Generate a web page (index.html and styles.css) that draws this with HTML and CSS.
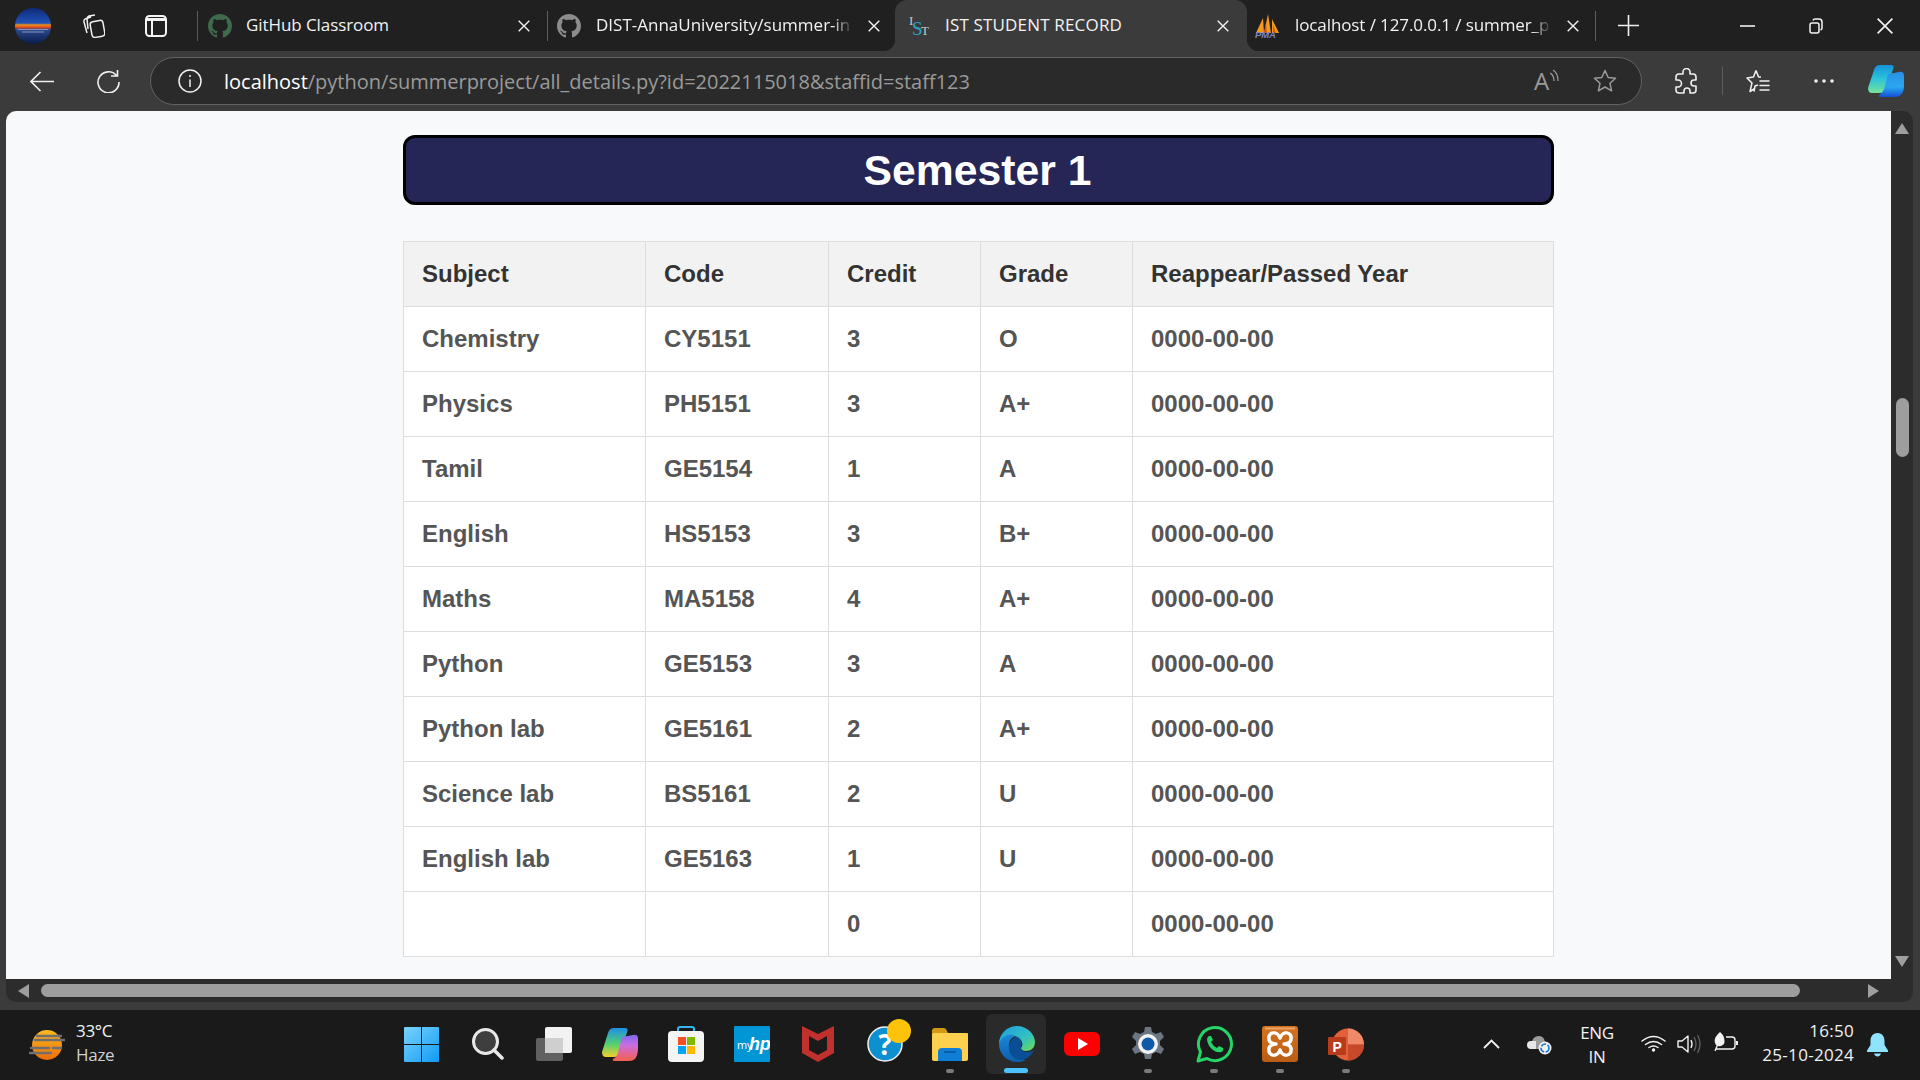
FILE: index.html
```html
<!DOCTYPE html>
<html lang="en">
<head>
    <meta charset="UTF-8">
    <meta name="viewport" content="width=device-width, initial-scale=1.0">
    <title>IST STUDENT RECORD</title>
    <link rel="stylesheet" href="styles.css">
</head>
<body>
    <svg class="defs" width="0" height="0">
        <defs>
            <symbol id="octo" viewBox="0 0 16 16">
                <path d="M8 0C3.58 0 0 3.58 0 8c0 3.54 2.29 6.53 5.47 7.59.4.07.55-.17.55-.38 0-.19-.01-.82-.01-1.49-2.01.37-2.53-.49-2.69-.94-.09-.23-.48-.94-.82-1.13-.28-.15-.68-.52-.01-.53.63-.01 1.08.58 1.23.82.72 1.21 1.87.87 2.33.66.07-.52.28-.87.51-1.07-1.78-.2-3.64-.89-3.64-3.95 0-.87.31-1.59.82-2.15-.08-.2-.36-1.02.08-2.12 0 0 .67-.21 2.2.82.64-.18 1.32-.27 2-.27.68 0 1.36.09 2 .27 1.53-1.04 2.2-.82 2.2-.82.44 1.1.16 1.92.08 2.12.51.56.82 1.27.82 2.15 0 3.07-1.87 3.75-3.65 3.95.29.25.54.73.54 1.48 0 1.07-.01 1.93-.01 2.2 0 .21.15.46.55.38A8.013 8.013 0 0016 8c0-4.42-3.58-8-8-8z"/>
            </symbol>
            <symbol id="close" viewBox="0 0 12 12">
                <path d="M.7.7l10.6 10.6M11.3.7L.7 11.3" fill="none" stroke="#f2f2f2" stroke-width="1.4"/>
            </symbol>
            <linearGradient id="sunset" x1="0" y1="0" x2="0" y2="1">
                <stop offset="0" stop-color="#0e2a78"/>
                <stop offset=".42" stop-color="#1f52b8"/>
                <stop offset=".47" stop-color="#e8921a"/>
                <stop offset=".53" stop-color="#f04a14"/>
                <stop offset=".6" stop-color="#2a4a90"/>
                <stop offset="1" stop-color="#0a1a48"/>
            </linearGradient>
            <linearGradient id="cop-a" x1="0" y1="0" x2="0" y2="1">
                <stop offset="0" stop-color="#1592dc"/>
                <stop offset=".5" stop-color="#2cc4d8"/>
                <stop offset="1" stop-color="#78e29a"/>
            </linearGradient>
            <linearGradient id="cop-b" x1="0" y1="0" x2="0" y2="1">
                <stop offset="0" stop-color="#2a8fe4"/>
                <stop offset=".6" stop-color="#2aa8f0"/>
                <stop offset="1" stop-color="#1450d8"/>
            </linearGradient>
            <linearGradient id="cop-c" x1="0" y1="0" x2="0" y2="1">
                <stop offset="0" stop-color="#1f8fe8"/>
                <stop offset=".55" stop-color="#50d070"/>
                <stop offset="1" stop-color="#f6cf2c"/>
            </linearGradient>
            <linearGradient id="cop-d" x1="0" y1="0" x2="0" y2="1">
                <stop offset="0" stop-color="#7a6cf0"/>
                <stop offset=".4" stop-color="#cc6ce0"/>
                <stop offset="1" stop-color="#f4604c"/>
            </linearGradient>
            <linearGradient id="sun" x1="0" y1="0" x2="0" y2="1">
                <stop offset="0" stop-color="#fdbb1e"/>
                <stop offset="1" stop-color="#ec6c0a"/>
            </linearGradient>
            <linearGradient id="win" x1="0" y1="0" x2="1" y2="1">
                <stop offset="0" stop-color="#7bd3fc"/>
                <stop offset="1" stop-color="#0f9bf5"/>
            </linearGradient>
            <linearGradient id="edge-a" x1="0" y1="0" x2="1" y2="1">
                <stop offset="0" stop-color="#1b9de2"/>
                <stop offset=".6" stop-color="#35c1c0"/>
                <stop offset="1" stop-color="#6fdc50"/>
            </linearGradient>
            <linearGradient id="edge-b" x1="0" y1="0" x2="0" y2="1">
                <stop offset="0" stop-color="#1a8ad8"/>
                <stop offset="1" stop-color="#0c5cae"/>
            </linearGradient>
            <linearGradient id="xampp" x1="0" y1="0" x2="0" y2="1">
                <stop offset="0" stop-color="#d4741f"/>
                <stop offset="1" stop-color="#bb5c16"/>
            </linearGradient>
        </defs>
    </svg>

    <div class="tabbar">
        <svg class="avatar" width="36" height="36" viewBox="0 0 36 36">
            <ellipse cx="18" cy="18" rx="18" ry="18" fill="url(#sunset)"/>
            <path d="M3 21.500h30M7 24h22" stroke="#8c93b8" stroke-width="1"/>
        </svg>
        <svg class="workspaces" width="24" height="24" viewBox="0 0 24 24" fill="none" stroke="#f0f0f0" stroke-width="1.5">
            <rect x="10" y="7" width="13" height="16" rx="3" transform="rotate(-10 16 15)"/>
            <path d="M10 3L4 5Q2.500 6 3 8l3 11M14 1L8 2Q6 3 6 5l1 10"/>
        </svg>
        <svg class="vtabs" width="22" height="22" viewBox="0 0 22 22" fill="none" stroke="#f4f4f4" stroke-width="2">
            <rect x="1" y="1" width="20" height="20" rx="3.500"/>
            <path d="M2 3h18v3H2z" fill="#f4f4f4" stroke="none"/>
            <path d="M7 6v15"/>
        </svg>
        <i class="tab-sep"></i>
        <div class="tab tab-one">
            <svg class="fav-git-green" width="24" height="24"><use href="#octo"/></svg>
            <span class="tab-title">GitHub Classroom</span>
            <svg width="12" height="12"><use href="#close"/></svg>
        </div>
        <i class="tab-sep"></i>
        <div class="tab tab-two">
            <svg class="fav-git-grey" width="24" height="24"><use href="#octo"/></svg>
            <span class="tab-title tab-fade">DIST-AnnaUniversity/summer-in</span>
            <svg width="12" height="12"><use href="#close"/></svg>
        </div>
        <div class="tab tab-active">
            <svg width="21" height="24" viewBox="0 0 21 24">
                <text x="0" y="11" class="fav-i">I</text>
                <text x="3" y="21" class="fav-s">S</text>
                <text x="12" y="21" class="fav-t">T</text>
            </svg>
            <span class="tab-title">IST STUDENT RECORD</span>
            <svg width="12" height="12"><use href="#close"/></svg>
        </div>
        <div class="tab tab-four">
            <svg width="25" height="26" viewBox="0 0 25 26">
                <path d="M1 20L8 5l1 15zM9 20L13 1l3 19zM17 20V6l7 14z" fill="#f29a1f"/>
                <path d="M9 20l2-10 1 10zM18 20V12l3 8z" fill="#d9531e"/>
                <text x="0" y="25" class="fav-pma">PMA</text>
            </svg>
            <span class="tab-title tab-fade">localhost / 127.0.0.1 / summer_p</span>
            <svg width="12" height="12"><use href="#close"/></svg>
        </div>
        <i class="tab-sep"></i>
        <svg class="newtab" width="21" height="21" viewBox="0 0 21 21"><path d="M10.500 0v21M0 10.500h21" stroke="#f2f2f2" stroke-width="1.600"/></svg>
        <svg class="win-min" width="15" height="2" viewBox="0 0 15 2"><path d="M0 1h15" stroke="#f2f2f2" stroke-width="1.600"/></svg>
        <svg class="win-max" width="14" height="16" viewBox="0 0 14 16" fill="none" stroke="#f2f2f2" stroke-width="1.500">
            <rect x="1" y="5" width="9" height="10" rx="2"/>
            <path d="M4 2.500Q4.500 1 6 1h4q3 0 3 3v6q0 1.500-1.500 2"/>
        </svg>
        <svg class="win-close" width="16" height="16" viewBox="0 0 16 16"><path d="M.6.6l14.800 14.800M15.400.6L.6 15.400" stroke="#f5f5f5" stroke-width="1.600"/></svg>
    </div>

    <div class="toolbar">
        <svg class="back" width="24" height="21" viewBox="0 0 24 21" fill="none" stroke="#f0f0f0" stroke-width="1.600"><path d="M24 10.500H1M10.500 1L1 10.500 10.500 20"/></svg>
        <svg class="reload" width="24" height="24" viewBox="0 0 24 24" fill="none" stroke="#f0f0f0" stroke-width="1.600"><path d="M20.500 6.500A10.500 10.500 0 1 0 23 13M21.500 1v6h-6.500"/></svg>
        <div class="address">
            <svg width="24" height="24" viewBox="0 0 24 24" fill="none" stroke="#f0f0f0" stroke-width="1.500">
                <circle cx="12" cy="12" r="11"/>
                <path d="M12 10.500V18"/>
                <circle cx="12" cy="7" r="1" fill="#f0f0f0" stroke="none"/>
            </svg>
            <span class="url"><span class="url-host">localhost</span>/python/summerproject/all_details.py?id=2022115018&amp;staffid=staff123</span>
            <div class="read">
                <span class="read-a">A</span>
                <svg width="9" height="14" viewBox="0 0 9 14" fill="none" stroke="#9a9a9a" stroke-width="1.300"><path d="M0 4q4 2 4 8M3 1q5 3 5 11"/></svg>
            </div>
            <svg class="star" width="24" height="24" viewBox="0 0 24 24" fill="none" stroke="#9a9a9a" stroke-width="1.500"><path d="M12 1.500l3.200 7 7.300.8-5.500 5 1.600 7.500L12 18l-6.600 3.800L7 14.300l-5.500-5 7.300-.8z" stroke-linejoin="round"/></svg>
        </div>
        <svg class="puzzle" width="22" height="26" viewBox="0 0 22 26" fill="none" stroke="#f0f0f0" stroke-width="1.600" stroke-linejoin="round">
            <path d="M8 6V4a3.500 3.500 0 0 1 7 0v2h3q3 0 3 3v3h-2a3 3 0 0 0 0 6h2v4q0 3-3 3h-3v-2a3 3 0 0 0-6 0v2H4q-3 0-3-3v-3h2a3.500 3.500 0 0 0 0-7H1V9q0-3 3-3z"/>
        </svg>
        <i class="tool-sep"></i>
        <svg class="favs" width="24" height="24" viewBox="0 0 24 24" fill="none" stroke="#f0f0f0" stroke-width="1.500" stroke-linejoin="round">
            <path d="M10 1.500l2.600 6.500h2.400M8 22.500l1-5.500 3-1M10 1.500L7.500 8 1 9l5 5-2 8.500 4-2.500"/>
            <path d="M14 12h9M14 16.500h9M14 21h9" stroke-linecap="round"/>
        </svg>
        <svg class="dots" width="20" height="4" viewBox="0 0 20 4" fill="#f0f0f0"><circle cx="2" cy="2" r="1.800"/><circle cx="10" cy="2" r="1.800"/><circle cx="18" cy="2" r="1.800"/></svg>
        <svg class="copilot" width="36" height="32" viewBox="0 0 36 32">
            <path d="M12 0h11q3 0 2.500 3L18 24q-2 4-6 4H4Q0 28 0 23L6 5q1.500-5 6-5z" fill="url(#cop-a)"/>
            <path d="M20 9l11-2q5-1 5 4v9q0 12-9 12H13q-3 0-2-2 3-1 5-6l4-15z" fill="url(#cop-b)"/>
        </svg>
    </div>

    <div class="window">
        <div class="page">
            <div class="content">
                <h1 class="sem-title">Semester 1</h1>
                <table class="marks">
                    <tr><th>Subject</th><th>Code</th><th>Credit</th><th>Grade</th><th>Reappear/Passed Year</th></tr>
                    <tr><td>Chemistry</td><td>CY5151</td><td>3</td><td>O</td><td>0000-00-00</td></tr>
                    <tr><td>Physics</td><td>PH5151</td><td>3</td><td>A+</td><td>0000-00-00</td></tr>
                    <tr><td>Tamil</td><td>GE5154</td><td>1</td><td>A</td><td>0000-00-00</td></tr>
                    <tr><td>English</td><td>HS5153</td><td>3</td><td>B+</td><td>0000-00-00</td></tr>
                    <tr><td>Maths</td><td>MA5158</td><td>4</td><td>A+</td><td>0000-00-00</td></tr>
                    <tr><td>Python</td><td>GE5153</td><td>3</td><td>A</td><td>0000-00-00</td></tr>
                    <tr><td>Python lab</td><td>GE5161</td><td>2</td><td>A+</td><td>0000-00-00</td></tr>
                    <tr><td>Science lab</td><td>BS5161</td><td>2</td><td>U</td><td>0000-00-00</td></tr>
                    <tr><td>English lab</td><td>GE5163</td><td>1</td><td>U</td><td>0000-00-00</td></tr>
                    <tr><td></td><td></td><td>0</td><td></td><td>0000-00-00</td></tr>
                </table>
            </div>
        </div>
        <div class="vbar">
            <i class="arrow arrow-up"></i>
            <i class="vthumb"></i>
            <i class="arrow arrow-down"></i>
        </div>
        <div class="hbar">
            <i class="arrow arrow-left"></i>
            <i class="hthumb"></i>
            <i class="arrow arrow-right"></i>
        </div>
        <div class="corner"></div>
    </div>

    <div class="taskbar">
        <div class="weather">
            <svg width="36" height="30" viewBox="0 0 36 30">
                <circle cx="18" cy="15" r="15" fill="url(#sun)"/>
                <path d="M8 6h24M6 10h30M2 18h18M24 18h8M0 23h22" stroke="#6f6f6f" stroke-width="2.500" stroke-linecap="round"/>
            </svg>
            <div class="weather-text">
                <span class="temp">33°C</span>
                <span class="haze">Haze</span>
            </div>
        </div>
        <div class="apps">
            <div class="app app-win">
                <svg width="35" height="35" viewBox="0 0 35 35" fill="url(#win)">
                    <path d="M1 0h16v17H0V1q0-1 1-1zM18 0h16q1 0 1 1v16H18zM0 18h17v17H1q-1 0-1-1zM18 18h17v16q0 1-1 1H18z"/>
                </svg>
            </div>
            <div class="app">
                <svg width="32" height="32" viewBox="0 0 32 32">
                    <circle cx="13.500" cy="13.500" r="12" fill="#3e3e3e" stroke="#e8e8e8" stroke-width="3"/>
                    <path d="M22 22l8 8" stroke="#e8e8e8" stroke-width="3.500" stroke-linecap="round"/>
                </svg>
            </div>
            <div class="app">
                <svg width="36" height="34" viewBox="0 0 36 34">
                    <rect x="9" y="0" width="27" height="26" rx="2" fill="#f2f2f2"/>
                    <rect x="0" y="11" width="27" height="23" rx="2" fill="#666" fill-opacity=".92"/>
                    <rect x="9" y="11" width="18" height="15" fill="#cfcfcf"/>
                </svg>
            </div>
            <div class="app">
                <svg width="36" height="33" viewBox="0 0 36 33">
                    <path d="M12 0h11q3 0 2.500 3L18 25q-2 4-6 4H4Q0 29 0 24L6 5q1.500-5 6-5z" fill="url(#cop-c)"/>
                    <path d="M20 9l11-2q5-1 5 4v9q0 13-9 13H13q-3 0-2-2 3-1 5-6l4-17z" fill="url(#cop-d)"/>
                </svg>
            </div>
            <div class="app">
                <svg width="36" height="36" viewBox="0 0 36 36">
                    <path d="M10 7V3q0-2 2-2h12q2 0 2 2v4" fill="none" stroke="#35b6f2" stroke-width="2"/>
                    <rect x="0" y="5" width="36" height="31" rx="4" fill="#f4f4f4"/>
                    <rect x="10" y="11" width="8" height="8" fill="#f25022"/>
                    <rect x="19" y="11" width="8" height="8" fill="#7fba00"/>
                    <rect x="10" y="20" width="8" height="8" fill="#00a4ef"/>
                    <rect x="19" y="20" width="8" height="8" fill="#ffb900"/>
                </svg>
            </div>
            <div class="app">
                <svg width="36" height="36" viewBox="0 0 36 36">
                    <rect width="36" height="36" rx="1" fill="#0096d6"/>
                    <text x="3" y="23" class="my">my</text>
                    <text x="15" y="24" class="hp">hp</text>
                </svg>
            </div>
            <div class="app">
                <svg width="32" height="36" viewBox="0 0 32 36">
                    <path d="M0 0l16 8 16-8v27L16 36 0 27z" fill="#c0302c"/>
                    <path d="M7 10l9 5 9-5v14l-9 5-9-5z" fill="#1a1a1a"/>
                </svg>
            </div>
            <div class="app app-help">
                <svg width="44" height="44" viewBox="0 0 44 44">
                    <circle cx="18" cy="25" r="17" fill="#0e8fd0" stroke="#f2f2f2" stroke-width="1.500"/>
                    <text x="18" y="36" class="help-q">?</text>
                    <ellipse cx="32" cy="12" rx="12" ry="12" fill="#fdc30a"/>
                </svg>
            </div>
            <div class="app has-dot">
                <svg width="36" height="33" viewBox="0 0 36 33">
                    <path d="M0 3q0-3 3-3h9q2 0 3 3l1 2h20v6H0z" fill="#d29a12"/>
                    <rect x="0" y="5" width="36" height="28" rx="2" fill="#fdd04e"/>
                    <path d="M6 33V24q0-4 4-4h16q4 0 4 4v9z" fill="#0e7fd4"/>
                    <path d="M12 24h12" stroke="#0b5ea8" stroke-width="2"/>
                </svg>
            </div>
            <div class="app app-edge">
                <svg width="37" height="36" viewBox="0 0 37 36">
                    <path d="M1 18C1 8 9 0 19 0c10 0 18 8 18 16 0 6-4 9-9 9-3 0-5-1-5-3 2-2 2-6-1-9C17 8 7 9 1 18z" fill="url(#edge-a)"/>
                    <path d="M1 18C3 10 12 6 18 10c-5 1-8 6-7 12 1 7 8 13 17 12-3 1.500-6 2-9 2C9 36 1 28 1 18z" fill="url(#edge-b)"/>
                    <path d="M11 22c0-6 3-10 8-11 3 1 5 4 4 9-1 3 2 6 7 6 2 0 5-1 6-2-2 5-6 9-12 10-7 .5-13-5-13-12z" fill="#0a4f96"/>
                </svg>
                <i class="edge-on"></i>
            </div>
            <div class="app">
                <svg width="36" height="24" viewBox="0 0 36 24">
                    <rect width="36" height="24" rx="6" fill="#f00"/>
                    <path d="M14 6l10 6-10 6z" fill="#fff"/>
                </svg>
            </div>
            <div class="app has-dot">
                <svg width="36" height="36" viewBox="0 0 36 36">
                    <path d="M15 1h6l1 5 4 2 5-2 3 5-4 4v4l4 4-3 5-5-2-4 2-1 5h-6l-1-5-4-2-5 2-3-5 4-4v-4L2 11l3-5 5 2 4-2z" fill="#6d7680"/>
                    <circle cx="18" cy="18" r="10" fill="#f2f2f2"/>
                    <circle cx="18" cy="18" r="6.500" fill="#0f5aa8"/>
                </svg>
            </div>
            <div class="app has-dot">
                <svg width="37" height="37" viewBox="0 0 37 37" fill="none">
                    <path d="M2 35l2.500-9A16.500 16.500 0 1 1 11 32.500z" stroke="#25d366" stroke-width="3" stroke-linejoin="round"/>
                    <path d="M13 10q-2 1-2 4 1 6 6 10 4 3 8 2 3-1 2-4l-4-2-2 2q-4-2-6-6l2-2-2-4z" fill="#25d366"/>
                </svg>
            </div>
            <div class="app has-dot">
                <svg width="36" height="36" viewBox="0 0 36 36">
                    <rect width="36" height="36" rx="3" fill="url(#xampp)"/>
                    <path d="M3 2.500h30" stroke="#e8a56a" stroke-width="2"/>
                    <path d="M18 12C16 5 6 5 7 13c0 4 5 5 7 5-2 0-7 1-7 5-1 8 9 8 11 1 2 7 12 7 11-1 0-4-5-5-7-5 2 0 7-1 7-5 1-8-9-8-11-1z" fill="none" stroke="#fff" stroke-width="3.500" stroke-linejoin="round"/>
                </svg>
            </div>
            <div class="app has-dot">
                <svg width="36" height="33" viewBox="0 0 36 33">
                    <circle cx="20" cy="16.500" r="16" fill="#e0613a"/>
                    <path d="M20 .500a16 16 0 0 1 16 16H20z" fill="#ee8a6a"/>
                    <path d="M36 16.500a16 16 0 0 1-16 16v-16z" fill="#c8492a"/>
                    <rect x="0" y="9" width="18" height="18" rx="1" fill="#b83c1c"/>
                    <text x="9" y="23.500" class="ppt-p">P</text>
                </svg>
            </div>
        </div>
        <div class="tray">
            <svg class="chevron" width="17" height="10" viewBox="0 0 17 10" fill="none" stroke="#f2f2f2" stroke-width="1.800"><path d="M1 9l7.500-7.500L16 9"/></svg>
            <svg class="cloud" width="25" height="20" viewBox="0 0 25 20">
                <path d="M5 14a4 4 0 0 1 0-8q2-5 7-5 5 0 6 6v7z" fill="#9b9b9b"/>
                <path d="M4 14a4 4 0 0 1 0-8h5v8z" fill="#e6e6e6"/>
                <circle cx="18" cy="13" r="6.500" fill="#f2f2f2"/>
                <circle cx="18" cy="13" r="4" fill="none" stroke="#1c76d2" stroke-width="1.600" stroke-dasharray="5.500 1.500"/>
            </svg>
            <div class="lang"><span>ENG</span><span>IN</span></div>
            <svg class="wifi" width="25" height="17" viewBox="0 0 25 17" fill="none" stroke="#f2f2f2" stroke-width="1.500" stroke-linecap="round">
                <path d="M1 6q11.500-9 23 0M4.500 9.500q8-6 16 0M8 12.500q4.500-3 9 0"/>
                <circle cx="12.500" cy="15" r="1.700" fill="#f2f2f2" stroke="none"/>
            </svg>
            <svg class="speaker" width="24" height="20" viewBox="0 0 24 20" fill="none" stroke="#f2f2f2" stroke-width="1.400" stroke-linejoin="round">
                <path d="M1 7v6h4l6 5V2L5 7z"/>
                <path d="M14 6q2 4 0 8"/>
                <path d="M17 3q4 7 0 14M20.500 1q5 9 0 18" stroke="#5f5f5f"/>
            </svg>
            <svg class="battery" width="25" height="20" viewBox="0 0 25 20" fill="none" stroke="#f2f2f2" stroke-width="1.400">
                <path d="M13 5h6q3 0 3 3v6q0 3-3 3H3"/>
                <path d="M24 9v4" stroke-width="2"/>
                <path d="M7 0q6 5 4 12-4 4-8 1Q-1 7 7 0z" fill="#f2f2f2" stroke="none"/>
                <path d="M7 7L2 19"/>
            </svg>
            <div class="clock"><span>16:50</span><span>25-10-2024</span></div>
            <svg class="bell" width="21" height="24" viewBox="0 0 21 24" fill="#8fe3ff">
                <path d="M10.500 0C5.500 0 3.500 4 3.500 8v4L0 17.500q-.5 1.500 1 1.500h19q1.500 0 1-1.500L17.500 12V8c0-4-2-8-7-8z"/>
                <path d="M7 20.500h7q-1 3-3.500 3T7 20.500z"/>
            </svg>
        </div>
    </div>
</body>
</html>
```

FILE: styles.css
```css
* {
    box-sizing: border-box;
}
html, body {
    margin: 0;
    height: 100%;
    overflow: hidden;
}
body {
    width: 1920px;
    height: 1080px;
    display: flex;
    flex-direction: column;
    font-family: "Open Sans", "Noto Sans", sans-serif;
    color: #f2f2f2;
    background-color: #3b3b3b;
}
.defs {
    position: absolute;
}
svg {
    flex: none;
    display: block;
}
i {
    display: block;
}

/* tab strip */
.tabbar {
    height: 51px;
    flex: none;
    display: flex;
    align-items: center;
    background-color: #202020;
    padding-left: 15px;
}
.workspaces {
    margin-left: 30px;
}
.vtabs {
    margin-left: 40px;
    margin-right: 30px;
}
.tab-sep {
    width: 1px;
    height: 30px;
    flex: none;
    background-color: #5c5c5c;
}
.tab {
    height: 51px;
    flex: none;
    display: flex;
    align-items: center;
    gap: 14px;
    font-size: 17px;
    letter-spacing: -0.3px;
}
.tab-title {
    flex: 1;
    min-width: 0;
    padding-bottom: 2px;
    white-space: nowrap;
}
.tab-fade {
    -webkit-mask-image: linear-gradient(to right, #000 92%, transparent 100%);
    mask-image: linear-gradient(to right, #000 92%, transparent 100%);
}
.tab-one {
    width: 349px;
    padding: 0 17px 0 10px;
    letter-spacing: -0.08px;
}
.tab-two {
    width: 347px;
    padding: 0 15px 0 9px;
    gap: 15px;
    letter-spacing: 0;
}
.tab-active {
    width: 352px;
    padding: 0 18px 0 14px;
    gap: 15px;
    background-color: #3b3b3b;
    border-radius: 12px 12px 0 0;
    position: relative;
    letter-spacing: 0.17px;
}
.tab-active::before, .tab-active::after {
    content: "";
    position: absolute;
    bottom: 0;
    width: 12px;
    height: 12px;
}
.tab-active::before {
    left: -12px;
    background: radial-gradient(circle at 0 0, transparent 12px, #3b3b3b 12.500px);
}
.tab-active::after {
    right: -12px;
    background: radial-gradient(circle at 100% 0, transparent 12px, #3b3b3b 12.500px);
}
.tab-four {
    width: 348px;
    padding: 0 16px 0 8px;
    gap: 15px;
    letter-spacing: -0.1px;
}
.fav-git-green {
    fill: #3f6a4c;
}
.fav-git-grey {
    fill: #8c8c8c;
}
.fav-i, .fav-t {
    font: 13px "Liberation Serif", serif;
    fill: #c8c8c8;
}
.fav-s {
    font: 19px "Liberation Serif", serif;
    fill: #2ea3cc;
}
.fav-pma {
    font: italic bold 9.500px "Liberation Sans", sans-serif;
    fill: #7c86c4;
}
.newtab {
    margin-left: 22px;
}
.win-min {
    margin-left: 101px;
}
.win-max {
    margin-left: 54px;
}
.win-close {
    margin-left: 54px;
}

/* address row */
.toolbar {
    height: 60px;
    flex: none;
    display: flex;
    align-items: center;
    background-color: #3b3b3b;
    padding-left: 30px;
}
.reload {
    margin-left: 42px;
}
.address {
    width: 1492px;
    height: 48px;
    flex: none;
    margin-left: 30px;
    display: flex;
    align-items: center;
    padding-left: 27px;
    background-color: #2a2a2a;
    border: 1.500px solid #626262;
    border-radius: 24px;
}
.url {
    width: 1310px;
    flex: none;
    margin-left: 22px;
    font-size: 20px;
    letter-spacing: 0;
    white-space: nowrap;
    color: #9a9a9a;
}
.url-host {
    color: #fff;
}
.read {
    width: 24px;
    height: 24px;
    flex: none;
    display: flex;
    align-items: flex-start;
    overflow: visible;
}
.read-a {
    width: 16px;
    flex: none;
    font-size: 24px;
    line-height: 24px;
    letter-spacing: 0;
    color: #9a9a9a;
}
.star {
    margin-left: 35px;
}
.puzzle {
    margin-left: 33px;
}
.tool-sep {
    width: 1px;
    height: 28px;
    margin-left: 25px;
    background-color: #5c5c5c;
}
.favs {
    margin-left: 23px;
}
.dots {
    margin-left: 44px;
}
.copilot {
    margin-left: 34px;
}

/* page + scrollbars */
.window {
    height: 899px;
    flex: none;
    display: grid;
    grid-template-columns: 1885px 22px;
    grid-template-rows: 868px 23px;
    padding-left: 6px;
}
.page {
    background-color: #f8f9fb;
    border-radius: 10px 0 0 0;
    overflow: hidden;
}
.content {
    padding: 24px 0 0 397px;
    width: 1548px;
    font-family: "Liberation Sans", Arial, sans-serif;
}
.sem-title {
    height: 70px;
    margin: 0 0 36px 0;
    padding-right: 2px;
    background-color: #252556;
    border: 3px solid #000;
    border-radius: 12px;
    color: #fff;
    font-size: 42.700px;
    line-height: 64px;
    text-align: center;
}
.marks {
    width: 1151px;
    table-layout: fixed;
    border-collapse: collapse;
    background-color: #fff;
    font-size: 24px;
    font-weight: bold;
}
.marks th, .marks td {
    height: 65px;
    padding: 0 18px;
    border: 1px solid #ddd;
    text-align: left;
}
.marks th {
    background-color: #f2f2f2;
    color: #333;
}
.marks td {
    color: #555;
}
.marks th:nth-child(1) {
    width: 242px;
}
.marks th:nth-child(2) {
    width: 183px;
}
.marks th:nth-child(3), .marks th:nth-child(4) {
    width: 152px;
}
.vbar {
    display: flex;
    flex-direction: column;
    align-items: center;
    background-color: #2c2c2c;
    border-radius: 0 10px 0 0;
    padding: 12px 0;
}
.hbar {
    display: flex;
    align-items: center;
    padding-left: 12px;
    background-color: #2c2c2c;
    border-radius: 0 0 0 10px;
}
.corner {
    background-color: #2c2c2c;
    border-radius: 0 0 10px 0;
}
.arrow {
    width: 0;
    height: 0;
    flex: none;
    border-style: solid;
    border-color: transparent;
}
.arrow-up {
    border-width: 0 7.500px 11px;
    border-bottom-color: #9e9e9e;
}
.arrow-down {
    border-width: 11px 7.500px 0;
    border-top-color: #9e9e9e;
    margin-top: 499px;
}
.arrow-left {
    border-width: 7px 11px 7px 0;
    border-right-color: #9e9e9e;
}
.arrow-right {
    border-width: 7px 0 7px 11px;
    border-left-color: #9e9e9e;
    margin-left: 68px;
}
.vthumb {
    width: 13px;
    height: 59px;
    flex: none;
    margin-top: 264px;
    background-color: #9e9e9e;
    border-radius: 7px;
}
.hthumb {
    width: 1759px;
    height: 13px;
    flex: none;
    margin-left: 12px;
    background-color: #9e9e9e;
    border-radius: 7px;
}

/* windows taskbar */
.taskbar {
    height: 70px;
    flex: none;
    display: flex;
    align-items: center;
    background-color: #1a1a1a;
    font-size: 17px;
    letter-spacing: -0.3px;
}
.weather {
    width: 389px;
    flex: none;
    display: flex;
    align-items: center;
    gap: 11px;
    padding-left: 29px;
}
.weather-text, .lang, .clock {
    display: flex;
    flex-direction: column;
    line-height: 24px;
}
.weather-text, .clock {
    margin-bottom: 5px;
}
.haze {
    color: #cfcfcf;
}
.apps {
    display: flex;
    flex: none;
    margin-top: -2px;
}
.app {
    width: 66px;
    height: 60px;
    flex: none;
    display: flex;
    align-items: center;
    justify-content: center;
    position: relative;
}
.app-win svg {
    margin-right: 2px;
}
.app-help svg {
    transform: translate(5px, -3px);
}
.has-dot::after {
    content: "";
    position: absolute;
    left: 29px;
    bottom: 1px;
    width: 8px;
    height: 4px;
    border-radius: 2px;
    background-color: #7a7a7a;
}
.app-edge {
    width: 60px;
    margin: 0 3px;
    background-color: #2a2a2a;
    border-radius: 6px;
}
.edge-on {
    position: absolute;
    left: 18px;
    bottom: 1px;
    width: 24px;
    height: 5px;
    border-radius: 3px;
    background-color: #4cc2ff;
}
.my {
    font: 11px "Open Sans", sans-serif;
    fill: #fff;
}
.hp {
    font: italic bold 18px "Liberation Sans", sans-serif;
    fill: #fff;
}
.help-q {
    font: bold 28px "Open Sans", sans-serif;
    fill: #fff;
    text-anchor: middle;
}
.ppt-p {
    font: bold 14px "Liberation Sans", sans-serif;
    fill: #fff;
    text-anchor: middle;
}
.tray {
    display: flex;
    align-items: center;
    padding-left: 104px;
}
.chevron {
    margin-bottom: 3px;
}
.cloud {
    margin-left: 27px;
}
.lang {
    width: 36px;
    margin-left: 27px;
    align-items: center;
}
.wifi {
    margin-left: 26px;
    margin-bottom: 3px;
}
.speaker {
    margin-left: 11px;
    margin-bottom: 2px;
}
.battery {
    margin-left: 12px;
    margin-bottom: 6px;
}
.clock {
    width: 92px;
    margin-left: 24px;
    align-items: flex-end;
    letter-spacing: 0.3px;
}
.bell {
    margin-left: 13px;
    margin-bottom: 1px;
}
```
